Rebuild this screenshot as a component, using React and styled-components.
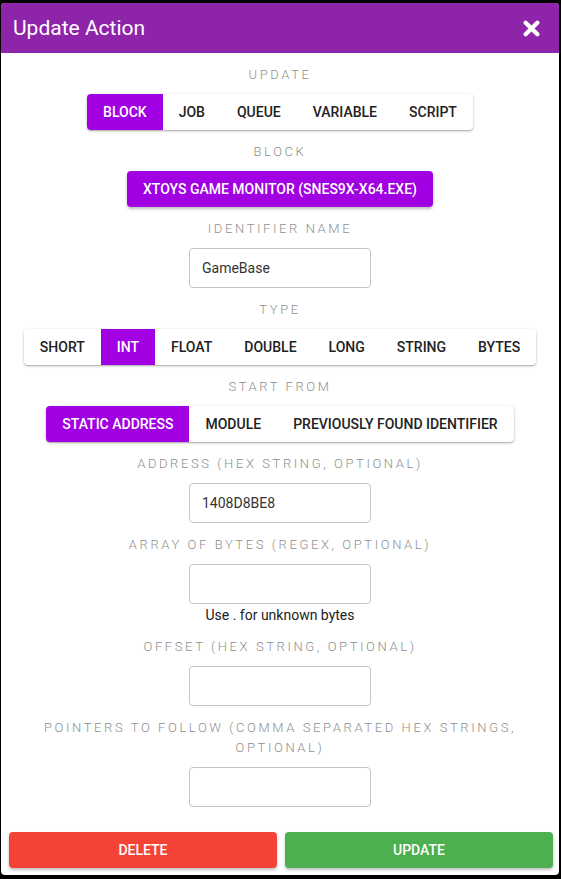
import React, { useState } from 'react';
import styled, { createGlobalStyle } from 'styled-components';

const GlobalStyle = createGlobalStyle`
  html, body {
    margin: 0;
    padding: 0;
    background: #000;
  }
  body {
    font-family: Roboto, "Liberation Sans", Arial, sans-serif;
  }
  * {
    box-sizing: border-box;
  }
`;

const Backdrop = styled.div`
  padding: 3px 2px 4px 1px;
  height: 879px;
`;

const Dialog = styled.div`
  background: #fff;
  border-radius: 4px;
  overflow: hidden;
  height: 872px;
  display: flex;
  flex-direction: column;
`;

const Header = styled.div`
  height: 50px;
  background: #8e24aa;
  display: flex;
  align-items: center;
  justify-content: space-between;
  padding: 0 19px 0 12px;
  flex-shrink: 0;
`;

const Title = styled.h2`
  margin: 0;
  font-size: 21px;
  font-weight: 400;
  color: #fff;
`;

const CloseButton = styled.button`
  border: none;
  background: none;
  padding: 0;
  display: flex;
  cursor: pointer;
`;

const Body = styled.div`
  flex: 1;
  padding: 12px 24px 0;
  display: flex;
  flex-direction: column;
  align-items: center;
`;

const Field = styled.div`
  display: flex;
  flex-direction: column;
  align-items: center;
  margin-bottom: ${p => p.$gap || 12}px;
`;

const Label = styled.div`
  font-size: 13px;
  font-weight: 300;
  line-height: 20px;
  letter-spacing: 2.6px;
  color: #8f8f8f;
  text-transform: uppercase;
  text-align: center;
  margin-bottom: 9px;
  max-width: 490px;
`;

const Group = styled.div`
  display: flex;
  height: 36px;
  background: #fff;
  border-radius: 4px;
  box-shadow: 0 1px 3px rgba(0, 0, 0, 0.25), 0 1px 1px rgba(0, 0, 0, 0.14);
  overflow: hidden;
`;

const ToggleButton = styled.button`
  border: none;
  margin: 0;
  padding: 0 16px;
  height: 100%;
  font-family: inherit;
  font-size: 14px;
  font-weight: 500;
  text-transform: uppercase;
  background: ${p => (p.$active ? '#a100e2' : 'transparent')};
  color: ${p => (p.$active ? '#fff' : '#222')};
  cursor: pointer;
`;

const SolidButton = styled.button`
  border: none;
  border-radius: 4px;
  height: 36px;
  padding: 0 16px;
  font-family: inherit;
  font-size: 14px;
  font-weight: 500;
  text-transform: uppercase;
  color: #fff;
  background: ${p => p.$color};
  box-shadow: 0 2px 3px rgba(0, 0, 0, 0.25);
  cursor: pointer;
`;

const Input = styled.input`
  width: 182px;
  height: 40px;
  border: 1px solid #c4c4c4;
  border-radius: 4px;
  padding: 0 12px;
  font-family: inherit;
  font-size: 14px;
  color: #333;
  outline: none;
`;

const Helper = styled.div`
  font-size: 14px;
  line-height: 18px;
  color: #222;
  margin-top: 2px;
`;

const Footer = styled.div`
  display: grid;
  grid-template-columns: 1fr 1fr;
  gap: 8px;
  padding: 0 6px 7px 8px;
`;

function Toggles({ options, value, onChange }) {
  return (
    <Group>
      {options.map(o => (
        <ToggleButton key={o} $active={o === value} onClick={() => onChange(o)}>
          {o}
        </ToggleButton>
      ))}
    </Group>
  );
}

export default function App() {
  const [kind, setKind] = useState('Block');
  const [type, setType] = useState('Int');
  const [start, setStart] = useState('Static Address');

  return (
    <>
      <GlobalStyle />
      <Backdrop>
        <Dialog>
          <Header>
            <Title>Update Action</Title>
            <CloseButton aria-label="close">
              <svg width="17" height="17" viewBox="0 0 16 16">
                <path d="M2.5 2.5 L13.5 13.5 M13.5 2.5 L2.5 13.5" stroke="#fff" strokeWidth="4" strokeLinecap="round" />
              </svg>
            </CloseButton>
          </Header>
          <Body>
            <Field>
              <Label>Update</Label>
              <Toggles options={['Block', 'Job', 'Queue', 'Variable', 'Script']} value={kind} onChange={setKind} />
            </Field>
            <Field>
              <Label>Block</Label>
              <SolidButton $color="#a100e2">xToys Game Monitor (snes9x-x64.exe)</SolidButton>
            </Field>
            <Field>
              <Label>Identifier Name</Label>
              <Input defaultValue="GameBase" />
            </Field>
            <Field>
              <Label>Type</Label>
              <Toggles options={['Short', 'Int', 'Float', 'Double', 'Long', 'String', 'Bytes']} value={type} onChange={setType} />
            </Field>
            <Field>
              <Label>Start From</Label>
              <Toggles options={['Static Address', 'Module', 'Previously Found Identifier']} value={start} onChange={setStart} />
            </Field>
            <Field>
              <Label>Address (hex string, optional)</Label>
              <Input defaultValue="1408D8BE8" />
            </Field>
            <Field $gap={13}>
              <Label>Array of Bytes (regex, optional)</Label>
              <Input />
              <Helper>Use . for unknown bytes</Helper>
            </Field>
            <Field>
              <Label>Offset (hex string, optional)</Label>
              <Input />
            </Field>
            <Field>
              <Label>Pointers to follow (comma separated hex strings, optional)</Label>
              <Input />
            </Field>
          </Body>
          <Footer>
            <SolidButton $color="#f44336">Delete</SolidButton>
            <SolidButton $color="#4caf50">Update</SolidButton>
          </Footer>
        </Dialog>
      </Backdrop>
    </>
  );
}
